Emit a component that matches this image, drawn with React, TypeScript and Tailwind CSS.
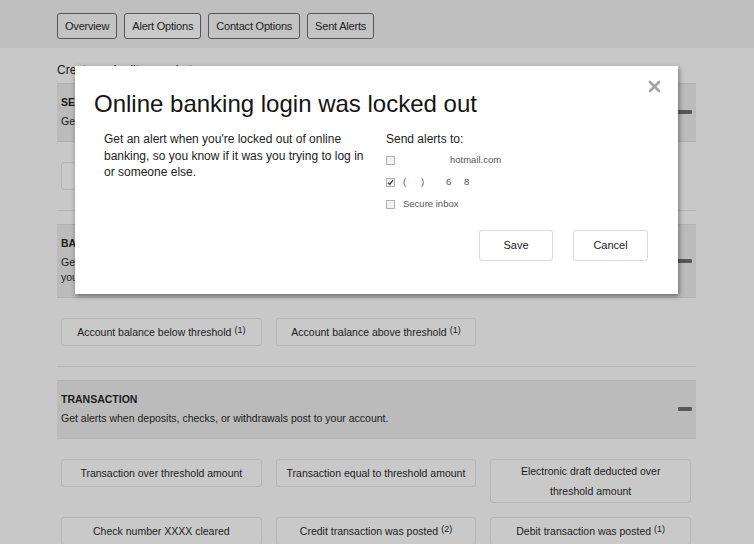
import React from "react";

const font = { fontFamily: '"Liberation Sans", Arial, sans-serif' };

const navItems = ["Overview", "Alert Options", "Contact Options", "Sent Alerts"];

interface AlertItem {
  label: string;
  count?: number;
}

interface Section {
  title: string;
  description: string;
  items: AlertItem[];
}

const sections: Section[] = [
  {
    title: "SECURITY",
    description:
      "Get alerts about activity that may affect the security of your accounts.",
    items: [
      { label: "Contact information was changed" },
      { label: "Online banking login was locked out" },
    ],
  },
  {
    title: "BALANCE",
    description:
      "Get alerts about your available balance, so you know when your account balance goes above or below the amount you set, and you can move money before it becomes a problem.",
    items: [
      { label: "Account balance below threshold", count: 1 },
      { label: "Account balance above threshold", count: 1 },
    ],
  },
  {
    title: "TRANSACTION",
    description:
      "Get alerts when deposits, checks, or withdrawals post to your account.",
    items: [
      { label: "Transaction over threshold amount" },
      { label: "Transaction equal to threshold amount" },
      { label: "Electronic draft deducted over threshold amount" },
      { label: "Check number XXXX cleared" },
      { label: "Credit transaction was posted", count: 2 },
      { label: "Debit transaction was posted", count: 1 },
    ],
  },
];

function AlertButton({ item }: { item: AlertItem }) {
  return (
    <button className="min-h-[28px] flex items-center justify-center border border-[#b6b6b6] bg-[#c9c9c9] rounded-[3px] pt-[2px] pb-[1px] px-[8px] text-[10.5px] leading-[19.5px] text-[#1c1c1c] text-center">
      <span>
        {item.label}
        {item.count !== undefined && (
          <sup className="text-[9px] ml-[3px] relative -top-[3px]">({item.count})</sup>
        )}
      </span>
    </button>
  );
}

function Checkbox({ checked }: { checked?: boolean }) {
  return (
    <span className="w-[9px] h-[9px] border border-[#b0b0b0] bg-[#f2f2f2] flex items-center justify-center shrink-0">
      {checked && (
        <svg width="7" height="7" viewBox="0 0 7 7">
          <path d="M1 3.6 L2.8 5.4 L6 1.2" stroke="#2a2a4a" strokeWidth="1.2" fill="none" />
        </svg>
      )}
    </span>
  );
}

function LockoutModal() {
  return (
    <div className="absolute left-[75px] top-[66px] w-[603px] h-[228px] bg-white shadow-[1px_2px_5px_rgba(0,0,0,0.45)] pt-[23px] pl-[19px]">
      <button className="absolute right-[17px] top-[14px] p-0">
        <svg width="13" height="13" viewBox="0 0 13 13">
          <path d="M2 2 L11 11 M11 2 L2 11" stroke="#a3a3a3" strokeWidth="2.6" strokeLinecap="round" />
        </svg>
      </button>
      <h2 className="text-[24px] leading-[29px] text-[#141414]">
        Online banking login was locked out
      </h2>
      <div className="flex mt-[13px]">
        <div className="w-[292px] pl-[10px]">
          <p className="w-[266px] text-[12px] leading-[16.5px] text-[#222]">
            Get an alert when you're locked out of online banking, so you know if it
            was you trying to log in or someone else.
          </p>
        </div>
        <div className="flex-1 pr-[30px]">
          <p className="text-[12px] leading-[16px] text-[#222]">Send alerts to:</p>
          <div className="mt-[2px] text-[9.5px] text-[#555]">
            <div className="h-[22px] flex items-center">
              <Checkbox />
              <span className="ml-[55px]">hotmail.com</span>
            </div>
            <div className="h-[22px] flex items-center">
              <Checkbox checked />
              <span className="ml-[8px] w-[18px]">(</span>
              <span className="w-[25px]">)</span>
              <span className="w-[18px]">6</span>
              <span>8</span>
            </div>
            <div className="h-[22px] flex items-center">
              <Checkbox />
              <span className="ml-[8px]">Secure inbox</span>
            </div>
          </div>
          <div className="flex justify-end gap-5 mt-[15px]">
            <button className="w-[74px] h-[31px] border border-[#dadada] rounded-[3px] bg-white text-[11px] text-[#222]">
              Save
            </button>
            <button className="w-[75px] h-[31px] border border-[#dadada] rounded-[3px] bg-white text-[11px] text-[#222]">
              Cancel
            </button>
          </div>
        </div>
      </div>
    </div>
  );
}

export default function App() {
  return (
    <div style={font} className="relative w-[754px] h-[544px] overflow-hidden bg-[#c8c8c8] text-[#1c1c1c]">
      {/* Top tabs */}
      <div className="h-[48px] bg-[#bfbfbf] pl-[57px] pt-[13px] flex gap-[7px] items-start">
        {navItems.map((item) => (
          <button
            key={item}
            className={`h-[26px] px-[7px] border border-[#555] rounded-[3px] text-[11px] tracking-[-0.2px] text-[#222] ${
              item === "Alert Options" ? "bg-[#c9c9c9]" : "bg-[#c3c3c3]"
            }`}>
            {item}
          </button>
        ))}
      </div>

      <div className="w-[639px] ml-[57px]">
        <p className="mt-[14px] mb-[5px] text-[12px] leading-[16px]">
          Create and edit your alerts.
        </p>

        {sections.map((section) => (
          <div key={section.title} className="mb-[13px]">
            <div className="bg-[#bbbbbb] border-t border-b border-[#b1b1b1] pl-[4px] pr-[4px] pt-[11px] pb-[12px] flex items-center">
              <div className="flex-1 pr-6">
                <h3 className="text-[10.5px] leading-[14px] font-bold">{section.title}</h3>
                <p className="mt-[5px] text-[10.5px] leading-[15px]">{section.description}</p>
              </div>
              <span className="w-[14px] h-[4px] rounded-[1px] bg-[#585858]" />
            </div>
            <div className="pt-[20px] pb-[20px] pl-[4px] pr-[5px] border-b border-[#b6b6b6] grid grid-cols-3 gap-x-[14px] gap-y-[14px] items-start">
              {section.items.map((item) => (
                <AlertButton key={item.label} item={item} />
              ))}
            </div>
          </div>
        ))}
      </div>

      <LockoutModal />
    </div>
  );
}
